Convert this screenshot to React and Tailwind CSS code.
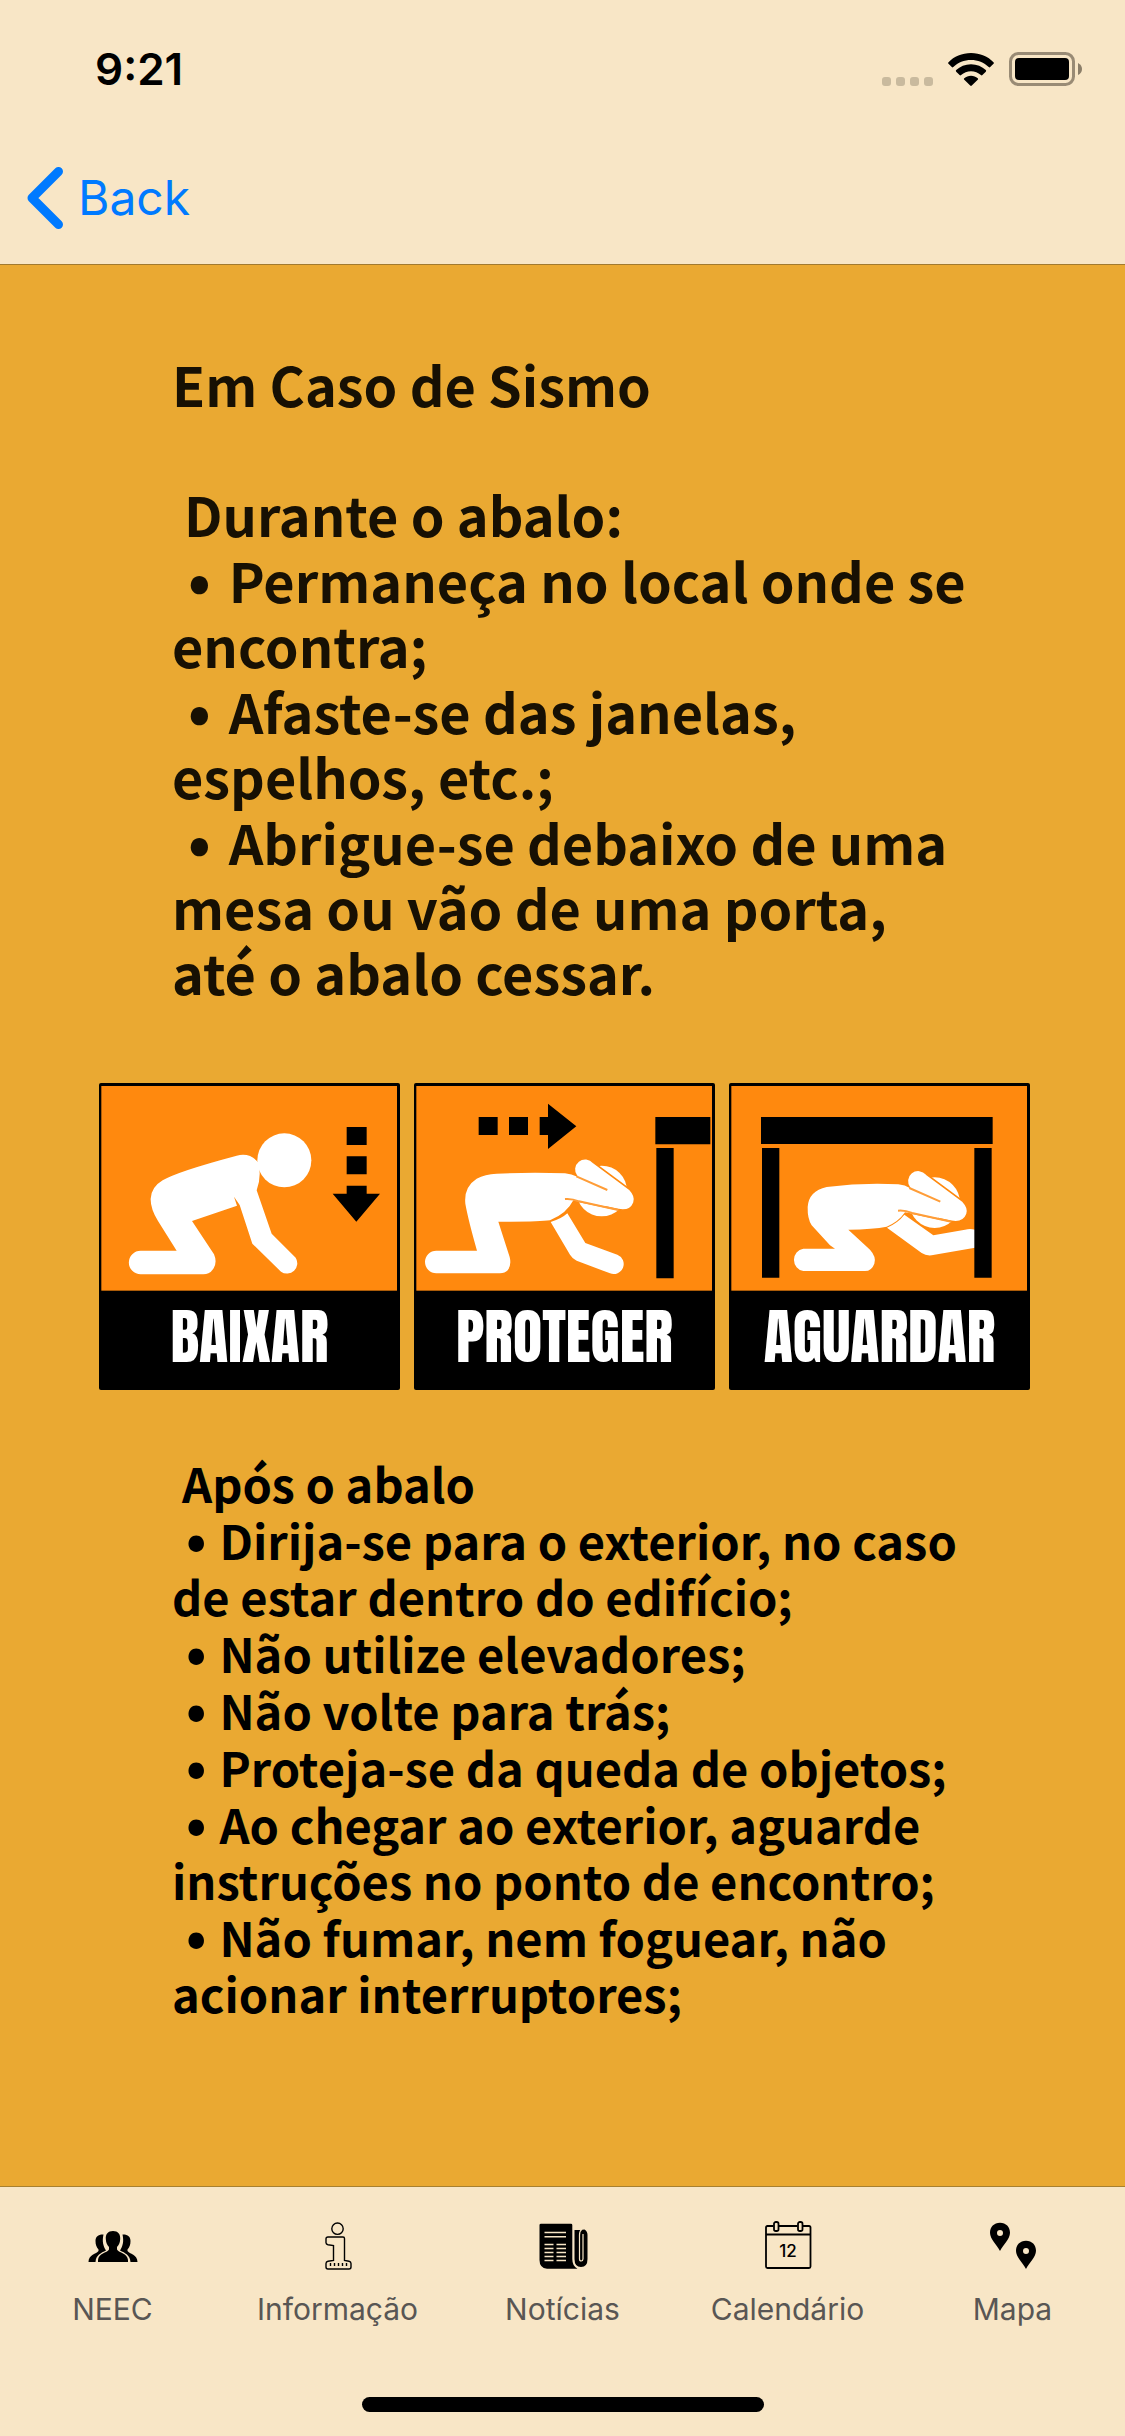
const duringItems = [
  "Permaneça no local onde se encontra;",
  "Afaste-se das janelas, espelhos, etc.;",
  "Abrigue-se debaixo de uma mesa ou vão de uma porta, até o abalo cessar.",
];

const afterItems = [
  "Dirija-se para o exterior, no caso de estar dentro do edifício;",
  "Não utilize elevadores;",
  "Não volte para trás;",
  "Proteja-se da queda de objetos;",
  "Ao chegar ao exterior, aguarde instruções no ponto de encontro;",
  "Não fumar, nem foguear, não acionar interruptores;",
];

function StatusBar() {
  return (
    <div className="flex h-[132px] items-center justify-between pt-[6px] pr-[43px] pl-[95px]">
      <time className="text-[44px] leading-[54px] font-semibold text-black">9:21</time>
      <div className="flex items-end gap-[15px]">
        <div className="flex gap-[5px]">
          <span className="size-[9px] rounded-[3px] bg-[#c9ba9e]" />
          <span className="size-[9px] rounded-[3px] bg-[#c9ba9e]" />
          <span className="size-[9px] rounded-[3px] bg-[#c9ba9e]" />
          <span className="size-[9px] rounded-[3px] bg-[#c9ba9e]" />
        </div>
        <svg className="h-[33px] w-[46px]" viewBox="0 0 46 33" aria-label="Wi-Fi">
          <path d="M23 0C32 0 40 3.500 45.500 9.200q.8.800 0 1.600l-3.300 3.300q-.7.700-1.500 0C36 9.500 29.800 7 23 7S10 9.500 5.300 14.100q-.8.700-1.500 0L.5 10.800q-.8-.8 0-1.600C6 3.500 14 0 23 0z" />
          <path d="M23 11.200c5.800 0 11 2.200 14.800 5.900q.8.800 0 1.600l-3.400 3.400q-.7.700-1.500 0a14.400 14.400 0 0 0-19.800 0q-.8.700-1.500 0l-3.400-3.400q-.8-.8 0-1.600C12 13.400 17.200 11.200 23 11.200z" />
          <path d="M23 22.800c2.600 0 4.900.9 6.700 2.400q.8.700 0 1.500l-5.900 5.900q-.8.700-1.600 0l-5.900-5.900q-.8-.8 0-1.500c1.800-1.500 4.100-2.400 6.700-2.400z" />
        </svg>
        <svg className="h-[34px] w-[73px]" viewBox="0 0 73 34" aria-label="Bateria">
          <rect x="1.500" y="1.500" width="63" height="31" rx="8" fill="none" stroke="#998b75" strokeWidth="3" />
          <rect x="6" y="6" width="54" height="22" rx="4" />
          <path d="M69 11q4 2 4 6t-4 6z" fill="#8b7e69" />
        </svg>
      </div>
    </div>
  );
}

function Frame({ title, label, children }) {
  return (
    <figure className="flex-1 overflow-hidden rounded-[2px] bg-black">
      <svg className="block w-full" viewBox="27 38 903 624" role="img" aria-label={title}>
        <rect x="34" y="47" width="887" height="614" fill="#ff890e" />
        {children}
      </svg>
      <figcaption className="flex h-[99px] items-center justify-center pb-[8px] font-['Anton','Impact',sans-serif] text-[60px] leading-[84px] font-normal text-white">
        {label}
      </figcaption>
    </figure>
  );
}

function CoveredHead() {
  return (
    <g>
      <circle cx="590" cy="362" r="76" fill="#fff" />
      <path
        d="M480 309L515 318A31 31 0 0 1 566 277L675 358Q694 378 687 397Q676 425 640 418L482 385Z"
        fill="#fff"
        stroke="#ff890e"
        strokeWidth="5"
      />
    </g>
  );
}

function CoverLines() {
  return <path d="M514 318L607 359M480 386Q500 384 522 393L640 419" fill="none" stroke="#ff9d38" strokeWidth="6" />;
}

function Posters() {
  return (
    <div className="mt-[79px] flex gap-[14px] pr-[95px] pl-[99px]">
      <Frame title="Pessoa a baixar-se" label="BAIXAR">
        <g fill="#fff">
          <circle cx="583" cy="270" r="81" />
          <path d="M152 541H260L204 452Q181 415 182 385Q184 350 218 330Q260 304 440 256Q480 246 504 276Q516 315 500 360L545 490L617 562A31 31 0 0 1 573 604L487 520L449 404L432 379L441 406L306 452L372 552Q382 575 371 594Q360 612 340 612H152A35 35 0 0 1 152 541Z" />
        </g>
        <path d="M770 170h60v54h-60zM770 258h60v54h-60zM770 346h60v24h40L799 454 728 370h42z" />
      </Frame>
      <Frame title="Pessoa a proteger a cabeça" label="PROTEGER">
        <CoveredHead />
        <g fill="#fff">
          <path d="M94 541H216Q190 450 181 400Q176 350 215 325Q240 311 275 310Q380 305 480 309Q500 311 517 319L600 356L600 408L505 390Q485 430 435 450Q400 455 280 454L314 560Q320 585 308 600Q300 609 285 609H94A34 34 0 0 1 94 541Z" />
          <path d="M437 455L495 553Q502 565 515 571L615 609A30 30 0 0 0 637 553L541 518L487 429Q470 445 437 455Z" />
        </g>
        <CoverLines />
        <path d="M221 140h57v54h-57zM312 140h57v54h-57zM404 140h25v-40L514 168 429 236v-42h-25zM751 140h165v82h-165zM754 233h52v391h-52z" />
      </Frame>
      <Frame title="Pessoa a aguardar debaixo de uma mesa" label="AGUARDAR">
        <g transform="translate(54 35)">
          <CoveredHead />
        </g>
        <g fill="#fff">
          <path d="M250 535H345L330 525L275 465Q262 445 263 410Q266 362 320 350Q430 336 535 342Q555 344 571 354L654 391L654 443L555 426Q535 455 500 469Q460 477 385 478L450 538Q470 560 463 580Q455 602 435 602H250A34 34 0 0 1 250 535Z" />
          <path d="M501 472L605 548Q618 557 635 555L765 532V478Q750 474 735 478L640 495L553 433Q535 457 501 472Z" />
        </g>
        <g transform="translate(54 35)">
          <CoverLines />
        </g>
        <path d="M123 140h695v81h-695zM126 233h52v389h-52zM763 233h52v389h-52z" />
      </Frame>
    </div>
  );
}

function TeamIcon() {
  return (
    <svg className="size-[50px]" viewBox="0 0 50 50" aria-hidden="true">
      <path d="M25 10c5 0 7.500 3 7.200 8-.2 4-1.400 6-3.200 8v2.500C31 32 39.500 32 40 39v2H10v-2c.5-7 9-7 11-10.500V26c-1.800-2-3-4-3.200-8-.3-5 2.200-8 7.200-8z" />
      <path d="M15.500 13.500c-5-.3-8 2-8 6.500 0 4 1 6 3 8.500v1.500C8.500 33 .5 33.500.500 41H7.500c.5-7 5.500-9 10.500-11.500-3-5-4-9-2.500-16z" />
      <path d="M34.500 13.500c5-.3 8 2 8 6.500 0 4-1 6-3 8.500v1.500c2 3 10 3.500 10 11H42.500c-.5-7-5.500-9-10.500-11.500 3-5 4-9 2.500-16z" />
    </svg>
  );
}

function InfoIcon() {
  return (
    <svg className="size-[50px]" viewBox="0 0 50 50" fill="none" stroke="#000" strokeWidth="1.400" aria-hidden="true">
      <circle cx="24.500" cy="7.700" r="5.700" />
      <path d="M15 16H30q1.500 0 1.500 1.500V39.500l4.500.8q2 .4 2 2.200V46q0 2-2 2H15q-2 0-2-2v-3.500q0-1.800 2-2.200l5.500-.8V24.500L15 23.800q-2-.4-2-2v-4q0-1.800 2-1.800z" />
      <path d="M17.500 42v3M21.500 42v3M25.500 42v3M29.500 42v3M33.500 42v3" />
    </svg>
  );
}

function NewsIcon() {
  return (
    <svg className="size-[50px]" viewBox="0 0 50 50" aria-hidden="true">
      <path d="M3 2.700H33q1.300 0 1.300 1.300V38q0 7 5.200 9.700H9Q1.500 47 1.500 39V4Q1.500 2.700 3 2.700z" />
      <path d="M36.500 9H42.500Q44 8.500 46.500 8.500 49.500 10 49.500 14V38q0 8-6.500 8-6.500 0-6.500-8z" />
      <path d="M44 8q-2.500 2-2.500 6V38q0 2 1.700 2T45 38V13" fill="none" stroke="#f8e6c6" strokeWidth="1.200" />
      <path
        d="M6.500 11.500H28M6.500 15.800H28M6.500 23.500h9M18.500 23.500H28M6.500 27.500h9M18.500 27.500H28M6.500 31.500h9M18.500 31.500H28M6.500 35.500h9M18.500 35.500H28M6.500 39.500h9M18.500 39.500H28"
        stroke="#f8e6c6"
        strokeWidth="1.600"
      />
    </svg>
  );
}

function CalendarIcon() {
  return (
    <svg className="size-[50px]" viewBox="0 0 50 50" fill="none" stroke="#000" strokeWidth="1.800" aria-hidden="true">
      <path d="M10.500 5H4.500Q3 5 3 6.500V45.500Q3 47 4.500 47H46Q47.500 47 47.500 45.500V6.500Q47.500 5 46 5H39.500M15.500 5H34.500M3 13.500H47.500" />
      <rect x="11" y="1" width="4.500" height="9" rx="1.800" />
      <rect x="35" y="1" width="4.500" height="9" rx="1.800" />
      <text x="25" y="36" textAnchor="middle" fill="#000" stroke="none" fontSize="17" fontWeight="500">12</text>
    </svg>
  );
}

function MapIcon() {
  return (
    <svg className="size-[50px]" viewBox="0 0 50 50" fillRule="evenodd" aria-hidden="true">
      <path d="M12 1.700c6 0 10 4.300 10 10C22 18 15 24 12 30 9 24 2 18 2 11.700c0-5.700 4-10 10-10zM12 9a3 3 0 1 0 0 6 3 3 0 0 0 0-6z" />
      <path d="M38 19.700c6 0 10 4.300 10 10C48 36 41 42 38 48 35 42 28 36 28 29.700c0-5.700 4-10 10-10zM38 27a3 3 0 1 0 0 6 3 3 0 0 0 0-6z" />
    </svg>
  );
}

const tabs = [
  { label: "NEEC", Icon: TeamIcon },
  { label: "Informação", Icon: InfoIcon },
  { label: "Notícias", Icon: NewsIcon },
  { label: "Calendário", Icon: CalendarIcon },
  { label: "Mapa", Icon: MapIcon },
];

export default function App() {
  return (
    <div className="flex min-h-screen flex-col bg-[#eaa932] font-['Inter',sans-serif] text-black">
      <header className="border-b border-[#a17a30] bg-[#f8e6c6]">
        <StatusBar />
        <nav className="flex h-[132px] items-center px-[26px]">
          <button type="button" className="flex items-center gap-[14px] text-[48px] leading-[60px] text-[#007aff]">
            <svg className="h-[64px] w-[38px]" viewBox="0 0 38 64" fill="none" stroke="currentColor" strokeWidth="9" strokeLinecap="round" strokeLinejoin="round" aria-hidden="true">
              <path d="M32.500 5.500L6 32l26.500 26.500" />
            </svg>
            Back
          </button>
        </nav>
      </header>

      <main className="flex-1 pt-[86px] pb-[100px] font-['Noto_Sans_CJK_JP',sans-serif] font-bold">
        <section className="pr-[156px] pl-[172px] text-[54px] leading-[65px] text-[#171003]">
          <h1>Em Caso de Sismo</h1>
          <h2 className="mt-[65px] pl-[12px]">Durante o abalo:</h2>
          <ul>
            {duringItems.map((item) => (
              <li key={item} className="mt-px">
                <span className="mr-[18px] ml-[16px] text-[60px] leading-[40px]">•</span>
                {item}
              </li>
            ))}
          </ul>
        </section>

        <Posters />

        <section className="mt-[65px] pr-[156px] pl-[172px] text-[47px] leading-[56px]">
          <h2 className="pl-[10px]">Após o abalo</h2>
          <ul>
            {afterItems.map((item) => (
              <li key={item} className="mt-px">
                <span className="mr-[13px] ml-[14px] text-[54px] leading-[40px]">•</span>
                {item}
              </li>
            ))}
          </ul>
        </section>
      </main>

      <footer className="border-t border-[#a8802e] bg-[#f8e6c6] pb-[24px]">
        <nav className="grid grid-cols-5 pt-[34px]">
          {tabs.map(({ label, Icon }) => (
            <button key={label} type="button" className="flex flex-col items-center gap-[18px] text-[30px] leading-[40px] text-[#595654]">
              <Icon />
              {label}
            </button>
          ))}
        </nav>
        <div className="mx-auto mt-[68px] h-[15px] w-[402px] rounded-full bg-black" />
      </footer>
    </div>
  );
}
